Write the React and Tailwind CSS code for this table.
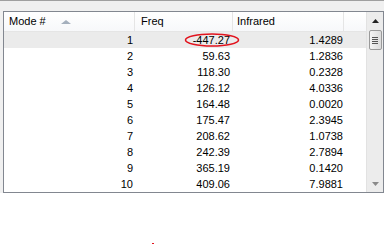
const rows = [
  [1, '-447.27', '1.4289'],
  [2, '59.63', '1.2836'],
  [3, '118.30', '0.2328'],
  [4, '126.12', '4.0336'],
  [5, '164.48', '0.0020'],
  [6, '175.47', '2.3945'],
  [7, '208.62', '1.0738'],
  [8, '242.39', '2.7894'],
  [9, '365.19', '0.1420'],
  [10, '409.06', '7.9881'],
];

const ScrollBar = () => (
  <div className="w-[17px] h-full bg-[#ececec] border-l border-[#e2e2e2] flex flex-col items-center">
    <div className="h-[17px] w-full flex items-center justify-center">
      <svg width="7" height="4" viewBox="0 0 7 4">
        <path d="M3.5 0 L7 4 L0 4 Z" fill="#222" />
      </svg>
    </div>
    <div className="mt-[1px] w-[13px] h-[20px] border border-[#9a9a9a] rounded-[2px] bg-gradient-to-r from-[#f4f4f4] to-[#dcdcdc] flex flex-col items-center justify-center gap-[1px]">
      <div className="w-[6px] h-[1px] bg-[#555]" />
      <div className="w-[6px] h-[1px] bg-[#555]" />
      <div className="w-[6px] h-[1px] bg-[#555]" />
      <div className="w-[6px] h-[1px] bg-[#555]" />
    </div>
    <div className="flex-1" />
    <div className="h-[17px] w-full flex items-center justify-center">
      <svg width="7" height="4" viewBox="0 0 7 4">
        <path d="M0 0 L7 0 L3.5 4 Z" fill="#8a8a8a" />
      </svg>
    </div>
  </div>
);

export default function App() {
  return (
    <div className="relative w-[384px] h-[245px] bg-white overflow-hidden font-['Liberation_Sans',Arial,sans-serif] text-[11px] text-black">
      <div className="h-[11px] bg-[#f0f0f0] border-t border-[#a0a0a0]" />
      <div className="flex">
        <div className="w-[3px] bg-[#f0f0f0]" />
        <div className="w-[381px] h-[182px] border border-[#828790] flex">
          <div className="flex-1 flex flex-col">
            <div className="h-[20px] flex bg-gradient-to-b from-white to-[#f7f8fa] border-b border-[#e5e5e5]">
              <div className="w-[131px] border-r border-[#e5e5e5] flex items-center pl-[5px]">
                <span>Mode #</span>
                <svg className="ml-[15px]" width="10" height="4" viewBox="0 0 10 4">
                  <path d="M5 0 L10 4 L0 4 Z" fill="#a5b0bd" />
                </svg>
              </div>
              <div className="w-[98px] border-r border-[#e5e5e5] flex items-center pl-[6px]">Freq</div>
              <div className="w-[111px] border-r border-[#e5e5e5] flex items-center pl-[4px]">Infrared</div>
              <div className="flex-1" />
            </div>
            {rows.map(([mode, freq, ir]) => (
              <div key={mode} className={`h-[16px] flex items-center ${mode === 1 ? 'bg-[#ebebeb]' : ''}`}>
                <div className="w-[131px] text-right pr-[2px]">{mode}</div>
                <div className="w-[98px] text-right pr-[3px]">{freq}</div>
                <div className="w-[111px] text-right pr-[1px]">{ir}</div>
              </div>
            ))}
          </div>
          <ScrollBar />
        </div>
      </div>
      <svg className="absolute left-[183px] top-[32px]" width="58" height="16" viewBox="0 0 58 16">
        <ellipse cx="29" cy="8" rx="26.5" ry="6" fill="none" stroke="#e2141e" strokeWidth="1.6" />
      </svg>
      <div className="absolute left-[152px] top-[243px] w-[2px] h-[1px] bg-[#e2141e]" />
    </div>
  );
}
